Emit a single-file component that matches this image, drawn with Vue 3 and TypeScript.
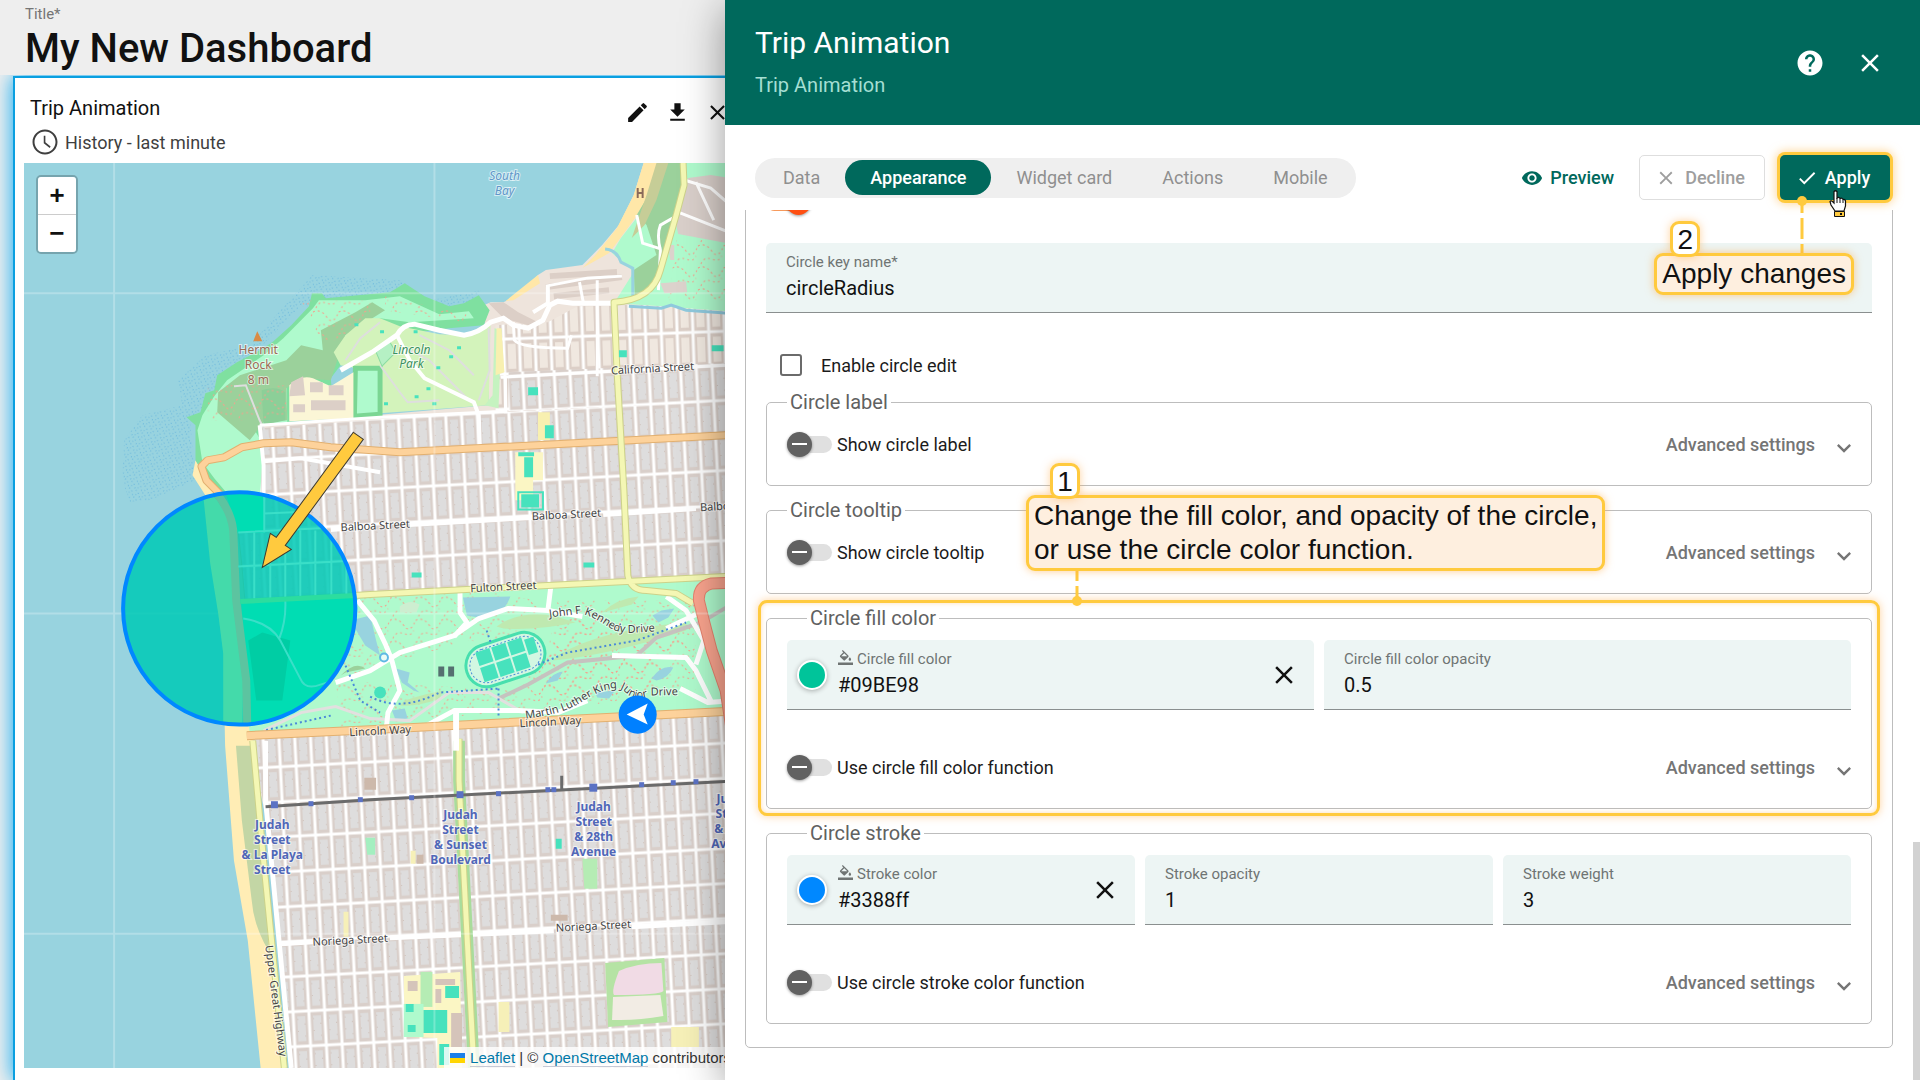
<script setup lang="ts">
import { ref } from 'vue'

interface Tab { id: string; label: string }

const icons = {
  close: 'M19 6.41L17.59 5 12 10.59 6.41 5 5 6.41 10.59 12 5 17.59 6.41 19 12 13.41 17.59 19 19 17.59 13.41 12z',
  pencil: 'M3 17.25V21h3.75L17.81 9.94l-3.75-3.75L3 17.25zM20.71 7.04a1 1 0 0 0 0-1.41l-2.34-2.34a1 1 0 0 0-1.41 0l-1.83 1.83 3.75 3.75 1.83-1.83z',
  download: 'M5 20h14v-2H5v2zM19 9h-4V3H9v6H5l7 7 7-7z',
  clock: 'M11.99 2C6.47 2 2 6.48 2 12s4.47 10 9.99 10C17.52 22 22 17.52 22 12S17.52 2 11.99 2zM12 20.4c-4.64 0-8.4-3.76-8.4-8.4S7.36 3.6 12 3.6s8.4 3.76 8.4 8.4-3.76 8.4-8.4 8.4zM12.3 7H11v6l4.75 3.75.75-1.13-4.2-3.37z',
  help: 'M12 2C6.48 2 2 6.48 2 12s4.48 10 10 10 10-4.48 10-10S17.52 2 12 2zm1 17h-2v-2h2v2zm2.07-7.75l-.9.92C13.45 12.9 13 13.5 13 15h-2v-.5c0-1.1.45-2.1 1.17-2.83l1.24-1.26c.37-.36.59-.86.59-1.41 0-1.1-.9-2-2-2s-2 .9-2 2H8c0-2.21 1.79-4 4-4s4 1.79 4 4c0 .88-.36 1.68-.93 2.25z',
  eye: 'M12 4.5C7 4.5 2.73 7.61 1 12c1.73 4.39 6 7.5 11 7.5s9.27-3.11 11-7.5c-1.73-4.39-6-7.5-11-7.5zM12 17c-2.76 0-5-2.24-5-5s2.24-5 5-5 5 2.24 5 5-2.24 5-5 5zm0-8c-1.66 0-3 1.34-3 3s1.34 3 3 3 3-1.34 3-3-1.34-3-3-3z',
  check: 'M9 16.17L4.83 12l-1.42 1.41L9 19 21 7l-1.41-1.41z',
  chevron: 'M7.41 8.59L12 13.17l4.59-4.58L18 10l-6 6-6-6z',
  fill: 'M16.56,8.94L7.62,0L6.21,1.41L8.59,3.79L3.44,8.94C2.85,9.5 2.85,10.47 3.44,11.06L8.94,16.56C9.23,16.85 9.62,17 10,17C10.38,17 10.77,16.85 11.06,16.56L16.56,11.06C17.15,10.47 17.15,9.5 16.56,8.94M5.21,10L10,5.21L14.79,10H5.21M19,11.5C19,11.5 17,13.67 17,15A2,2 0 0,0 19,17A2,2 0 0,0 21,15C21,13.67 19,11.5 19,11.5M0,20h24v4H0z'
}

const tabs: Tab[] = [
  { id: 'data', label: 'Data' },
  { id: 'appearance', label: 'Appearance' },
  { id: 'card', label: 'Widget card' },
  { id: 'actions', label: 'Actions' },
  { id: 'mobile', label: 'Mobile' }
]
const activeTab = ref('appearance')

const title = ref('My New Dashboard')
const showCircle = ref(true)
const circleKey = ref('circleRadius')
const enableEdit = ref(false)
const showLabel = ref(false)
const showTooltip = ref(false)
const fillColor = ref('#09BE98')
const fillOpacity = ref('0.5')
const useFillFn = ref(false)
const strokeColor = ref('#3388ff')
const strokeOpacity = ref('1')
const strokeWeight = ref('3')
const useStrokeFn = ref(false)

/* Tram stops along the Judah line: x, y, size */
const stops = [
  [273, 804, 7], [310, 803, 5], [360, 799, 5], [412, 797, 5], [461, 794, 7], [500, 793, 5],
  [550, 789, 5], [556, 789, 5], [596, 787, 8], [645, 784, 5], [677, 782, 5], [700, 781, 5]
]
const stopNames = [
  { x: 272, y: 828, lines: ['Judah', 'Street', '& La Playa', 'Street'] },
  { x: 460, y: 818, lines: ['Judah', 'Street', '& Sunset', 'Boulevard'] },
  { x: 593, y: 810, lines: ['Judah', 'Street', '& 28th', 'Avenue'] },
  { x: 733, y: 802, lines: ['Judah', 'Street', '& 19th', 'Avenue'] }
]
const streets = [
  { x: 652, y: 372, t: 'California Street' },
  { x: 375, y: 529, t: 'Balboa Street' },
  { x: 566, y: 518, t: 'Balboa Street' },
  { x: 734, y: 509, t: 'Balboa Street' },
  { x: 503, y: 590, t: 'Fulton Street' },
  { x: 380, y: 734, t: 'Lincoln Way' },
  { x: 550, y: 725, t: 'Lincoln Way' },
  { x: 350, y: 943, t: 'Noriega Street' },
  { x: 593, y: 929, t: 'Noriega Street' }
]
</script>

<template>
  <div class="page">
    <main class="dashboard">
      <header class="dash-head">
        <label for="dash-title">Title*</label>
        <input id="dash-title" v-model="title" type="text">
      </header>
      <div class="canvas">
        <section class="widget">
          <div class="widget-head">
            <div class="widget-titles">
              <h2>Trip Animation</h2>
              <div class="timewindow">
                <svg class="i30" viewBox="0 0 24 24"><path :d="icons.clock" /></svg>
                <span>History - last minute</span>
              </div>
            </div>
            <div class="widget-tools">
              <button type="button" aria-label="Edit"><svg class="i25" viewBox="0 0 24 24"><path :d="icons.pencil" /></svg></button>
              <button type="button" aria-label="Download"><svg class="i25" viewBox="0 0 24 24"><path :d="icons.download" /></svg></button>
              <button type="button" aria-label="Remove"><svg class="i25" viewBox="0 0 24 24"><path :d="icons.close" /></svg></button>
            </div>
          </div>

          <div class="map">
            <svg class="map-art" viewBox="24 163 714 904" preserveAspectRatio="xMinYMin slice">
              <defs>
                <pattern id="blocks-s" width="16" height="35" patternUnits="userSpaceOnUse" patternTransform="translate(400 935) rotate(-3)">
                  <rect width="16" height="35" fill="#d9cfca" />
                  <rect x="4" y="5" width="8" height="25" fill="#dedddd" />
                  <path d="M4 8h1M12 13h-1M4 20h1M12 25h-1" stroke="#cfc2bb" />
                  <path d="M0 0H16M0 35H16M0 0V35M16 0V35" stroke="#fff" stroke-width="3" />
                </pattern>
                <pattern id="blocks-n" width="16" height="35" patternUnits="userSpaceOnUse" patternTransform="translate(388 523) rotate(-3)">
                  <rect width="16" height="35" fill="#d9cfca" />
                  <rect x="4" y="5" width="8" height="25" fill="#dedddd" />
                  <path d="M4 8h1M12 13h-1M4 20h1M12 25h-1" stroke="#cfc2bb" />
                  <path d="M0 0H16M0 35H16M0 0V35M16 0V35" stroke="#fff" stroke-width="3" />
                </pattern>
                <pattern id="blocks-b" width="16" height="35" patternUnits="userSpaceOnUse" patternTransform="translate(617 335) rotate(-2)">
                  <rect width="16" height="35" fill="#dccfc7" />
                  <rect x="4" y="5" width="8" height="25" fill="#f0e8e0" />
                  <path d="M0 0H16M0 35H16M0 0V35M16 0V35" stroke="#fff" stroke-width="3" />
                </pattern>
                <pattern id="shoal" width="7" height="7" patternUnits="userSpaceOnUse" patternTransform="rotate(20)">
                  <path d="M1 1h1M4 3h1M2 5h1M6 6h1" stroke="#5fb0dc" stroke-opacity=".8" />
                </pattern>
                <pattern id="trails" width="26" height="22" patternUnits="userSpaceOnUse">
                  <path d="M0 4Q8 0 14 9T26 4M3 22Q6 14 14 17T24 14" fill="none" stroke="#f5a08c" stroke-width="1" stroke-dasharray="2 3" />
                </pattern>
                <clipPath id="inside"><circle cx="239" cy="608" r="116" /></clipPath>
                <path id="kennedy" d="M549 617L581 613Q596 618 607 626T637 632L672 630" />
                <path id="mlk" d="M525 718Q561 714 580 702T608 689Q618 685 626 693T651 695L700 694" />
                <path id="highway" d="M265 945L280 1062" />
              </defs>

              <rect x="24" y="163" width="714" height="904" fill="#98d3df" />
              <path d="M122 480L124 440L142 415L182 405L178 380L205 355L250 345L280 310L312 275L400 280L430 300L480 290L478 306H300L190 420L195 480L150 500L130 502z" fill="url(#shoal)" />

              <g transform="translate(5 0) scale(.986 1)">
                <!-- land -->
                <path d="M647 163L637 195L622 225L605 245L585 265L548 270L540 275L520 295L505 302L492 302L478 308L490 330L490 405L258 425L262 540L247 600V740L264 815L280 940L290 1067H748V163z" fill="#eee4dc" />
                <path d="M258 428L485 411L748 398V580L240 604L236 500L258 500z" fill="url(#blocks-n)" />
                <path d="M250 737L748 711V1067H288L280 940L264 815z" fill="url(#blocks-s)" />
                <path d="M497 325L550 322L580 306L748 302V400L497 412z" fill="url(#blocks-b)" />
                <path d="M510 372L748 362V400L510 411z" fill="url(#blocks-n)" />
                <path d="M490 303L505 302L520 312L540 322L530 325L505 318z" fill="#dccfc7" />
                <path d="M552 276L620 272M548 287L625 277M556 296L612 290" stroke="#dccfc7" stroke-width="6" />

                <!-- beaches -->
                <path d="M647 163H662L648 205L622 240L612 253L585 268L598 255L620 228L637 195z" fill="#ffe7a8" />
                <path d="M540 275L542 283L515 300L507 301z" fill="#ffe7a8" />
                <path d="M193 460L190 475L203 495L208 530L212 580L221 650L223 745L232 860L246 940L259 1067H284L270 945L262 860L252 745L240 640L236 560L226 505L205 480z" fill="#ffedb5" />
                <path d="M234 745H252L257 800L267 900V950Q252 925 250 900L240 820z" fill="#c3d6a5" />

                <!-- presidio -->
                <path d="M662 163H748V312L690 308L665 306L617 303L637 272L615 253L624 238L650 205z" fill="#affacd" />
                <path d="M662 163H687L686 190L664 262L655 286L638 296L637 270L660 255L650 225L640 215L655 190z" fill="#9bd19b" />
                <path d="M660 163H672L660 200L648 225L635 238L650 195z" fill="#c6cd97" />
                <path d="M692 178L715 175L748 180V246L682 234L678 216z" fill="#d9cfca" />
                <path d="M688 180L715 188L738 208M682 212L738 234M700 182L718 220M662 290L664 250Q660 235 664 225L680 216M640 215L646 243L665 249" fill="none" stroke="#fff" stroke-width="3" />
                <path d="M608 249Q620 250 624 262L636 268V297" fill="none" stroke="#98d3df" stroke-width="3" />
                <path d="M632 306L665 308L675 305L690 310L748 314" fill="none" stroke="#8fc9dd" stroke-width="3" />
                <path d="M680 240H748V300H672z" fill="url(#trails)" />
                <path d="M664 283L690 281L691 292L668 293zM672 245H678V260H674z" fill="#dcd2cc" />

                <!-- lands end and lincoln park -->
                <path d="M184 417L198 412L203 393L212 390L215 375L235 362L262 348L272 341L290 325L308 306L311 293L321 293L325 298L390 292L405 283L425 296L450 306L465 303L480 295L491 310L485 325L450 328L395 335L340 365L330 378L334 418L258 424V500L240 512L205 480L193 460V425z" fill="#7fe0a0" />
                <path d="M200 415L212 396L225 380L262 355L282 338L312 308L318 300L365 300L400 296L440 314L470 311L475 318L410 322L380 318L345 340L330 370L285 378L286 422L250 425L262 445L258 500L238 508L212 478L200 462L195 430z" fill="#affacd" />
                <path d="M216 392L238 375L285 360L300 345L322 350L320 330L355 312L372 302L385 310L345 335L335 365L330 380L300 378L285 388L286 420L262 422L248 440L215 412z" fill="#9bd19b" />
                <path d="M260 390Q275 385 284 392V420L262 425z" fill="#8ccf98" />
                <path d="M205 385H285V420H205zM300 300H370V340H320zM385 296L470 314L465 322L385 310z" fill="url(#trails)" />
                <path d="M333 352L345 335L365 318L380 318L400 326L440 334L470 335L492 322L490 405L380 413L378 372L340 365z" fill="#d3f3bb" />
                <path d="M355 368H380V414L354 416z" fill="#affacd" stroke="#7bd693" stroke-width="5" />
                <path d="M288 385Q300 374 312 378L330 386L353 372V418L288 421z" fill="#fbf6d6" />
                <path d="M290 382L302 376L304 395L288 396zM309 382H322V392H309zM310 400H345V410H310zM328 385H343V395H328zM292 404H304V412H292z" fill="#dccfc7" />
                <path d="M232 386L244 385L258 420L268 440M380 365L400 392L408 402L440 400M420 335L450 350L475 375M400 345L430 360L470 400M490 328L491 370L480 400M345 360L360 338L380 322" fill="none" stroke="#dedede" stroke-width="2" />
                <path d="M376 352L390 342L396 352L382 366z" fill="#b5f0c4" stroke="#8adba2" />
                <path d="M380 330h4v3h-4zM414 330h4v3h-4zM458 346h4v3h-4zM450 355h4v3h-4zM437 366h4v3h-4zM427 387h4v3h-4zM415 395h4v3h-4zM384 402h4v3h-4zM433 402h4v3h-4zM354 323h4v3h-4z" fill="#47e2bd" />
                <path d="M496 328L494 395L486 405L500 408L503 330z" fill="#c5f3c0" />
                <path d="M498 328H503L506 372L497 375zM540 412H552V440H540z" fill="#f8f0b0" />

                <!-- golden gate park -->
                <path d="M240 602L748 576V708L248 735z" fill="#affacd" />
                <path d="M330 600L480 590L540 600V650L470 640L330 680zM560 600L700 600V690L540 700z" fill="url(#trails)" />
                <path d="M335 680L520 690L580 610L690 640L640 700L340 726z" fill="url(#trails)" />
                <path d="M498 626Q520 610 555 615L578 622Q540 630 505 628zM560 655Q600 630 690 622L690 630Q610 655 555 660zM405 700Q430 692 445 690L440 698Q420 706 400 705zM605 612Q620 598 642 596L635 604z" fill="#bfe9b0" />
                <path d="M464 597L512 596Q505 615 485 618L468 615zM656 615L665 610L678 608L672 617L662 622zM655 678Q665 664 677 667Q672 678 660 680zM548 683Q555 672 565 671L560 680zM396 668L410 672L408 682L420 692L414 690L402 682zM598 692L618 690L612 698L600 697zM350 620L370 615L376 640L380 655L365 645zM392 710L405 708L408 718L396 720z" fill="#98d3df" />
                <path d="M340 675Q355 660 365 668L345 672z" fill="#9bd19b" />
                <path d="M400 606Q410 598 420 604L417 612H400z" fill="#cdeed0" />
                <g transform="rotate(-18 507 659)">
                  <rect x="466" y="638" width="82" height="42" rx="21" fill="#d2f7e2" stroke="#47dfae" stroke-width="3" />
                  <rect x="470" y="642" width="74" height="34" rx="17" fill="none" stroke="#4a8ad8" stroke-width="1" stroke-dasharray="2 2" />
                  <path d="M480 643H495V657H480zM497 643H512V657H497zM514 643H529V657H514zM480 659H495V674H480zM497 659H512V674H497zM514 659H529V674H514zM531 646H541V662H531z" fill="#47e2bd" />
                </g>
                <circle cx="380" cy="692" r="6" fill="#47e2bd" />
                <path d="M439 666H445V676H439zM449 666H455V676H449z" fill="#556f70" />
                <path d="M748 597L705 622L660 637L640 655L570 662L530 684L500 698" fill="none" stroke="#c6c2bf" stroke-width="4" />
                <path d="M262 730L300 712L335 706L370 718L410 720L450 692L490 692L525 712" fill="none" stroke="#e2e0df" stroke-width="3" />
                <path d="M357 600L374 620L386 645L392 660L400 690L388 712L386 730M335 682L370 670L400 652L455 635L480 618L510 608L550 610M461 592V612L468 622L455 636M553 586L550 610L585 616M670 628L700 614M670 596L690 610L708 640L700 664M615 655L690 657L700 670L715 700M684 688L712 702L738 700M427 725L455 710L520 710L560 712L590 700M457 710V740" fill="none" stroke="#fff" stroke-width="5" stroke-linejoin="round" />
                <path d="M370 696Q400 712 440 692L500 688M330 715L262 730M500 688V715M540 664L570 652L640 640L690 622M488 630L492 642M345 665L360 700L380 712" fill="none" stroke="#4a8ad8" stroke-width="2" stroke-dasharray="2 3" />
                <circle cx="384" cy="657" r="4" fill="#e9fbf5" stroke="#5fb8e4" stroke-width="2" />

                <!-- north side roads -->
                <g fill="none" stroke="#fff">
                  <path d="M340 370L372 352L397 335Q403 324 415 324L440 330L465 335Q480 333 492 322L505 318L515 325L530 328L545 320L552 305L560 301L575 303L617 303" stroke-width="5" />
                  <path d="M397 335L410 360L425 378L450 390L475 402L480 415L481 445M550 286V303L535 312" stroke-width="4" />
                  <path d="M502 377L748 364M507 377V413M258 425L380 417L507 411M515 322L516 340Q522 348 570 348L574 335M548 286L590 278L625 276M600 280V376M582 282L586 303" stroke-width="3" />
                  <path d="M258 425L262 465V500M262 461L300 458L380 472" stroke-width="4" />
                  <path d="M330 529L370 526M410 524L534 517M606 514L700 508M280 943L312 941M390 937L556 930M635 926L748 920M264 740V800L290 1067" stroke-width="5" />
                </g>

                <!-- arterial roads -->
                <g fill="none" stroke-linejoin="round">
                  <path d="M247 725L245 660L236 560L231 515L222 498L204 480L199 466L205 460L222 457L240 447L262 443L290 442L330 447L400 452L748 434" stroke="#e2b070" stroke-width="8" />
                  <path d="M247 725L245 660L236 560L231 515L222 498L204 480L199 466L205 460L222 457L240 447L262 443L290 442L330 447L400 452L748 434" stroke="#fdd29b" stroke-width="6" />
                  <path d="M245 735L370 729L748 710" stroke="#e2b070" stroke-width="9" />
                  <path d="M245 735L370 729L748 710" stroke="#fdd29b" stroke-width="7" />
                  <path d="M460 740V780L475 1067" stroke="#a9dc9c" stroke-width="12" />
                  <path d="M241 602L370 594L748 575M687 163L688 185L680 215L664 270Q656 300 617 302L620 370L627 490L631 575Q634 590 650 590L680 593L697 603M251 740L262 860L283 1067M460 738V780L475 1067" stroke="#ccd28a" stroke-width="7" />
                  <path d="M241 602L370 594L748 575M687 163L688 185L680 215L664 270Q656 300 617 302L620 370L627 490L631 575Q634 590 650 590L680 593L697 603M251 740L262 860L283 1067M460 738V780L475 1067" stroke="#f4f7b4" stroke-width="5" />
                  <path d="M457 710V750" stroke="#fff" stroke-width="6" />
                  <path d="M748 582L716 583Q702 586 703 600L708 620L716 650L730 690L737 735" stroke="#e5826e" stroke-width="12" />
                  <path d="M748 582L716 583Q702 586 703 600L708 620L716 650L730 690L737 735" stroke="#faa48e" stroke-width="10" />
                  <path d="M264 806L370 799L748 780M564 790V775" stroke="#6b6b6b" stroke-width="3" />
                </g>

                <!-- schools and pitches -->
                <path d="M517 452H545V480H535V500H517z" fill="#fbf6c4" />
                <path d="M526 457H535V477H526zM520 452H536V456H520zM523 494H541V507H523zM530 387H540V395H530zM622 350H630V357H622zM412 572H422V577H412zM586 562H597V567H586zM547 425H556V438H547zM716 345H728V351H716z" fill="#47e2bd" />
                <path d="M520 492H545V509H520z" fill="none" stroke="#47e2bd" stroke-width="2" />
                <path d="M404 975L461 971L463 1067H438V1037L405 1036z" fill="#fbf6c4" />
                <path d="M408 980H418V990H408zM436 978H456V984H436zM436 988H442V1002H436zM452 1012H463V1046H452z" fill="#d5c4ba" />
                <path d="M421 971H433V1006H421z" fill="#b5ecb4" />
                <path d="M404 1003H424V1036H404z" fill="#affacd" />
                <path d="M424 1009H448V1032H424zM406 1003H414V1011H406zM446 985H460V997H446zM408 1024H416V1031H408zM440 1043H450V1064H440zM686 1040H696V1046H686zM587 869H598V874H587zM558 838H564V848H558z" fill="#47e2bd" />
                <path d="M585 858H600V888H587z" fill="#b5ecb4" />
                <path d="M365 837H375V854H367z" fill="#a4efc0" />
                <path d="M343 911H348V936H343zM500 1001H511V1031H500zM675 1026H703V1046H675zM411 850H416V863H411z" fill="#f6f0b8" />
                <path d="M417 854H424V863H417zM553 914H570V920H553zM364 777H376V789H364z" fill="#cdb9ab" />
                <path d="M608 962L668 957L671 1021L611 1026z" fill="#b5e3a4" />
                <path d="M622 970Q640 962 665 962L667 990Q664 994 617 994Q614 990 622 970z" fill="#f1dbe5" />
                <path d="M616 996L664 994L667 1015Q640 1020 615 1019z" fill="#f2ece4" />

                <rect v-for="(s, i) in stops" :key="i" :x="s[0] - s[2] / 2" :y="s[1] - s[2] / 2" :width="s[2]" :height="s[2]" fill="#5b72c4" />
                <path d="M641 188V198M646 188V198M641 193H646" stroke="#8a6a5a" stroke-width="2" />
              </g>

              <path d="M114 163V1067M434 163V1067M24 293H738M24 613H738M24 933H738" stroke="#fff" stroke-opacity=".25" stroke-width="2" />

              <!-- labels -->
              <g class="lbl" text-anchor="middle">
                <g class="water"><text x="504" y="180">South</text><text x="504" y="195">Bay</text></g>
                <g class="peak"><text x="258" y="354">Hermit</text><text x="258" y="369">Rock</text><text x="258" y="384">8 m</text></g>
                <g class="park"><text x="411" y="354">Lincoln</text><text x="411" y="368">Park</text></g>
                <text v-for="s in streets" :key="s.t + s.x" class="street" :x="s.x" :y="s.y" :transform="`rotate(-3 ${s.x} ${s.y})`">{{ s.t }}</text>
                <g v-for="n in stopNames" :key="n.x" class="stop">
                  <text v-for="(l, i) in n.lines" :key="i" :x="n.x" :y="n.y + i * 15">{{ l }}</text>
                </g>
              </g>
              <g class="lbl street">
                <text><textPath href="#kennedy">John F Kennedy Drive</textPath></text>
                <text><textPath href="#mlk">Martin Luther King Junior Drive</textPath></text>
                <text><textPath href="#highway">Upper Great Highway</textPath></text>
              </g>
              <path d="M257 331L262 341H253z" fill="#d98b45" />

              <!-- tracked entity, its circle and the pointer -->
              <circle cx="239" cy="608" r="116" fill="#00cab6" fill-opacity=".86" />
              <g clip-path="url(#inside)" fill="none">
                <path d="M222 480H262L265 532H237z" fill="#00ddb3" />
                <path d="M241 602L358 596V700L250 730z" fill="#00ddb3" />
                <path d="M248 640L262 632L290 640L282 700H256z" fill="#00cda4" />
                <path d="M202 485L210 563L218 613L223 653V726L242 724L243 680L238 613L230 547V520L217 500z" fill="#44daaa" />
                <path d="M214 490Q231 510 233 530L236 600L246 680L247 724" stroke="#5cc4a0" stroke-width="8" />
                <path d="M238 532L358 526M264 490V532M254 532V598M270 532V598M285 530V598M300 530V596M315 530V596M331 528V596M346 528V596M238 566L358 560M264 513L310 511M243 618Q270 622 280 640L300 678Q305 690 320 684L350 675M285 600Q286 620 279 638" stroke="#3adfc8" stroke-width="2" />
                <path d="M240 601L358 595" stroke="#2cdd9f" stroke-width="5" />
              </g>
              <circle cx="239" cy="608" r="116" fill="none" stroke="#0088ff" stroke-width="4" />
              <path d="M353 432L363 439L285 545L291 549L262 567L270 533L276 537z" fill="#ffca3e" stroke="#3d3a30" stroke-width="1" />
              <circle cx="637" cy="714" r="19" fill="#0080ff" />
              <path d="M626 714L647 703L643 714L647 724z" fill="#fff" />
            </svg>

            <div class="zoom">
              <button type="button" aria-label="Zoom in">+</button>
              <button type="button" aria-label="Zoom out">−</button>
            </div>
            <div class="credit">
              <svg width="15" height="10" viewBox="0 0 15 10"><path fill="#1a7fe8" d="M0 0h15v5H0z" /><path fill="#ffd500" d="M0 5h15v5H0z" /></svg>
              <a href="#leaflet">Leaflet</a> | © <a href="#osm">OpenStreetMap</a> contributors
            </div>
          </div>
        </section>
      </div>
    </main>

    <aside class="panel">
      <header class="panel-head">
        <div class="head-text">
          <h1>Trip Animation</h1>
          <p>Trip Animation</p>
        </div>
        <div class="head-tools">
          <button type="button" aria-label="Help"><svg class="i30" viewBox="0 0 24 24"><path :d="icons.help" /></svg></button>
          <button type="button" aria-label="Close"><svg class="i30" viewBox="0 0 24 24"><path :d="icons.close" /></svg></button>
        </div>
      </header>

      <div class="toolbar">
        <nav class="tabs">
          <button v-for="t in tabs" :key="t.id" type="button" :class="{ active: t.id === activeTab }" @click="activeTab = t.id">{{ t.label }}</button>
        </nav>
        <div class="actions">
          <button type="button" class="preview"><svg class="i22" viewBox="0 0 24 24"><path :d="icons.eye" /></svg>Preview</button>
          <button type="button" class="decline"><svg class="i22" viewBox="0 0 24 24"><path :d="icons.close" /></svg>Decline</button>
          <div class="apply-wrap">
            <button type="button" class="apply"><svg class="i22" viewBox="0 0 24 24"><path :d="icons.check" /></svg>Apply</button>
            <svg class="lead lead-apply" width="10" height="57" viewBox="0 0 10 57">
              <circle cx="5" cy="5" r="5" fill="#ffca3e" />
              <path d="M5 8V17M5 22V43M5 48V57" stroke="#ffca3e" stroke-width="3" />
            </svg>
            <div class="note note-apply"><b>2</b>Apply changes</div>
            <svg class="hand" width="18" height="28" viewBox="0 0 18 28">
              <path d="M5 1.500Q6.500 0 8 1.500V8Q10 6.500 11 8.500Q13 7.500 14 9.500Q16 9 16.500 11V16L15 21H6L2 15L1 11.500Q2 10 4 12L5 13z" fill="#fff" stroke="#111" stroke-width="1.200" />
              <path d="M8 8V13M11 9V13M14 10V13" stroke="#111" />
              <path d="M5.500 21.500H15.500V26.500H5.500z" fill="#ffca3e" stroke="#111" />
              <path d="M11 23h2v2h-2z" fill="#111" />
            </svg>
          </div>
        </div>
      </div>

      <div class="scroller">
        <form class="group" @submit.prevent>
          <div class="row"><input v-model="showCircle" class="switch" type="checkbox" aria-label="Show circle"></div>

          <div class="field">
            <div class="field-text">
              <label for="f-key">Circle key name*</label>
              <input id="f-key" v-model="circleKey" type="text">
            </div>
          </div>

          <label class="check-row"><input v-model="enableEdit" type="checkbox">Enable circle edit</label>

          <fieldset>
            <legend>Circle label</legend>
            <div class="row">
              <label><input v-model="showLabel" class="switch" type="checkbox">Show circle label</label>
              <button type="button" class="advanced">Advanced settings<svg viewBox="0 0 24 24"><path :d="icons.chevron" /></svg></button>
            </div>
          </fieldset>

          <fieldset>
            <legend>Circle tooltip</legend>
            <div class="row">
              <label><input v-model="showTooltip" class="switch" type="checkbox">Show circle tooltip</label>
              <button type="button" class="advanced">Advanced settings<svg viewBox="0 0 24 24"><path :d="icons.chevron" /></svg></button>
            </div>
          </fieldset>

          <div class="marked">
            <fieldset class="wide">
              <legend>Circle fill color</legend>
              <div class="fields">
                <div class="field color">
                  <button type="button" class="swatch" aria-label="Pick fill color" :style="{ background: '#00c49a' }"></button>
                  <div class="field-text">
                    <label for="f-fill"><svg viewBox="0 0 24 24"><path :d="icons.fill" /></svg>Circle fill color</label>
                    <input id="f-fill" v-model="fillColor" type="text">
                  </div>
                  <button type="button" class="clear" aria-label="Clear"><svg class="i30" viewBox="0 0 24 24"><path :d="icons.close" /></svg></button>
                </div>
                <div class="field">
                  <div class="field-text">
                    <label for="f-fill-op">Circle fill color opacity</label>
                    <input id="f-fill-op" v-model="fillOpacity" type="text">
                  </div>
                </div>
              </div>
              <div class="row">
                <label><input v-model="useFillFn" class="switch" type="checkbox">Use circle fill color function</label>
                <button type="button" class="advanced">Advanced settings<svg viewBox="0 0 24 24"><path :d="icons.chevron" /></svg></button>
              </div>
            </fieldset>
            <div class="frame"></div>
            <svg class="lead lead-fill" width="10" height="35" viewBox="0 0 10 35">
              <path d="M5 0V10M5 15V28" stroke="#ffca3e" stroke-width="3" />
              <circle cx="5" cy="30" r="5" fill="#ffca3e" />
            </svg>
            <div class="note note-fill"><b>1</b>Change the fill color, and opacity of the circle,<br>or use the circle color function.</div>
          </div>

          <fieldset class="wide">
            <legend>Circle stroke</legend>
            <div class="fields">
              <div class="field color">
                <button type="button" class="swatch" aria-label="Pick stroke color" :style="{ background: '#0088ff' }"></button>
                <div class="field-text">
                  <label for="f-stroke"><svg viewBox="0 0 24 24"><path :d="icons.fill" /></svg>Stroke color</label>
                  <input id="f-stroke" v-model="strokeColor" type="text">
                </div>
                <button type="button" class="clear" aria-label="Clear"><svg class="i30" viewBox="0 0 24 24"><path :d="icons.close" /></svg></button>
              </div>
              <div class="field">
                <div class="field-text">
                  <label for="f-stroke-op">Stroke opacity</label>
                  <input id="f-stroke-op" v-model="strokeOpacity" type="text">
                </div>
              </div>
              <div class="field">
                <div class="field-text">
                  <label for="f-stroke-w">Stroke weight</label>
                  <input id="f-stroke-w" v-model="strokeWeight" type="text">
                </div>
              </div>
            </div>
            <div class="row">
              <label><input v-model="useStrokeFn" class="switch" type="checkbox">Use circle stroke color function</label>
              <button type="button" class="advanced">Advanced settings<svg viewBox="0 0 24 24"><path :d="icons.chevron" /></svg></button>
            </div>
          </fieldset>
        </form>
      </div>
      <div class="thumb"></div>
    </aside>
  </div>
</template>

<style>
body { margin: 0; }
</style>

<style scoped>
* { box-sizing: border-box; }
.page {
  display: grid;
  grid-template-columns: 725fr 1195fr;
  height: 100vh;
  overflow: hidden;
  font-family: Roboto, sans-serif;
  font-size: 18px;
  color: #1b1b1b;
  background: #eee;
}
button, input { font: inherit; color: inherit; }
button { border: 0; padding: 0; background: none; cursor: pointer; display: flex; align-items: center; justify-content: center; }
input[type='text'] { border: 0; padding: 0; background: none; outline: 0; width: 100%; min-width: 0; }
h1, h2, p { margin: 0; font-weight: 400; }
svg { fill: currentColor; flex: none; display: block; }
.i22 { width: 22px; height: 22px; }
.i25 { width: 25px; height: 25px; }
.i30 { width: 30px; height: 30px; }

/* dashboard */
.dashboard { display: flex; flex-direction: column; min-width: 0; min-height: 0; overflow: hidden; }
.dash-head { display: flex; flex-direction: column; height: 75px; padding: 5px 0 0 25px; flex: none; }
.dash-head label { font-size: 15px; line-height: 18px; color: #757575; }
.dash-head input { font-size: 40px; line-height: 52px; height: 52px; font-weight: 500; color: #111; }
.canvas { flex: 1; min-height: 0; display: flex; padding: 1px 0 0 13px; overflow: hidden; }
.widget {
  flex: 1;
  display: flex;
  flex-direction: column;
  margin-right: -20px;
  padding: 0 6px 12px 9px;
  background: #fff;
  border: 2px solid #0a9fe0;
  border-bottom: 0;
  box-shadow: 0 0 20px #03a9f4;
}
.widget-head { display: flex; justify-content: space-between; height: 85px; padding: 14px 0 0 6px; flex: none; }
.widget-titles h2 { font-size: 20px; line-height: 32px; color: #111; }
.timewindow { display: flex; align-items: center; gap: 5px; height: 36px; color: #3f3f3f; }
.widget-tools { display: flex; height: 40px; color: #111; }
.widget-tools button { width: 40px; height: 40px; }

.map { position: relative; flex: 1; min-height: 0; overflow: hidden; background: #98d3df; }
.map-art { width: 100%; height: 100%; }
.lbl { font-family: 'Noto Sans', sans-serif; font-size: 12px; paint-order: stroke; stroke: rgba(255, 255, 255, 0.6); stroke-width: 2px; }
.water { font-style: italic; fill: #5f97c9; }
.peak { fill: #9c6b55; }
.park { font-style: italic; fill: #3c9160; }
.street { font-size: 11px; fill: #444; }
.stop { font-weight: 700; fill: #5067b8; }
.zoom {
  position: absolute;
  top: 12px;
  left: 12px;
  border: 2px solid rgba(0, 0, 0, 0.22);
  border-radius: 5px;
  background-clip: padding-box;
}
.zoom button { width: 38px; height: 37px; padding-top: 4px; background: #fff; color: #111; font: 700 26px/33px 'Liberation Mono', monospace; border-radius: 0 0 3px 3px; }
.zoom button:first-child { height: 38px; border-bottom: 1px solid #ccc; border-radius: 3px 3px 0 0; }
.credit {
  position: absolute;
  right: 0;
  bottom: 0;
  padding: 0 6px;
  background: rgba(255, 255, 255, 0.8);
  font: 15px/21px 'Liberation Sans', Arial, sans-serif;
  color: #333;
  white-space: nowrap;
}
.credit svg { display: inline-block; margin-right: 5px; }
.credit a { color: #0078a8; text-decoration: none; border-bottom: 1px solid #c5c9d6; }

/* details panel */
.panel { position: relative; z-index: 1; display: flex; flex-direction: column; min-width: 0; min-height: 0; background: #fff; box-shadow: 0 8px 40px rgba(0, 0, 0, 0.4); }
.panel-head { display: flex; justify-content: space-between; align-items: center; flex: none; height: 125px; padding: 0 30px; background: #00695c; color: #fff; }
.head-text { padding-top: 2px; }
.panel-head h1 { font-size: 30px; line-height: 42px; }
.panel-head p { font-size: 20px; line-height: 42px; color: #a5dfd3; }
.head-tools { display: flex; gap: 10px; margin-right: -5px; }
.head-tools button { width: 50px; height: 50px; }

.toolbar { position: relative; z-index: 2; display: flex; justify-content: space-between; align-items: center; flex: none; height: 85px; padding: 20px 30px 0; }
.tabs { display: flex; align-items: center; height: 40px; padding: 0 3px; border-radius: 20px; background: #efefef; }
.tabs button { height: 35px; padding: 0 25px; border-radius: 18px; color: #8f8f8f; white-space: nowrap; }
.tabs .active { background: #00695c; color: #fff; font-weight: 500; }
.actions { display: flex; align-items: center; font-weight: 500; }
.actions button { height: 45px; border-radius: 5px; }
.preview { gap: 7px; margin-right: 25px; color: #00695c; }
.actions .decline { gap: 8px; width: 126px; padding-right: 4px; border: 1px solid #dedede; color: #9e9e9e; }
.apply-wrap { position: relative; margin-left: 15px; }
.actions .apply { gap: 7px; width: 110px; padding-right: 4px; background: #00695c; color: #fff; box-shadow: 0 0 0 3px #ffca3e, 0 0 10px 4px rgba(255, 190, 90, 0.6); }

.note {
  position: absolute;
  padding: 1px 5px;
  border: 3px solid #ffca3e;
  border-radius: 9px;
  background: #feefdf;
  box-shadow: 0 0 8px rgba(255, 170, 70, 0.6);
  color: #111;
  font: 28px/34px 'Liberation Sans', Arial, sans-serif;
  white-space: nowrap;
}
.note b {
  position: absolute;
  bottom: 100%;
  left: 13px;
  width: 30px;
  height: 36px;
  margin-bottom: -1px;
  border: 3px solid #ffca3e;
  border-radius: 9px;
  background: #fff;
  box-shadow: 0 0 8px rgba(255, 170, 70, 0.5);
  font-weight: 400;
  line-height: 31px;
  text-align: center;
}
.note-apply { top: 98px; right: 36px; }
.note-fill { left: 260px; bottom: calc(100% + 35px); }
.note-fill b { left: 21px; }
.lead { position: absolute; }
.lead-apply { top: 41px; left: 17px; }
.lead-fill { left: 306px; bottom: 100%; }
.hand { position: absolute; top: 35px; left: 49px; }
.frame {
  position: absolute;
  inset: -6px -8px -7px -8px;
  border: 3px solid #ffca3e;
  border-radius: 9px;
  box-shadow: 0 0 8px rgba(255, 170, 70, 0.5), inset 0 0 5px rgba(255, 170, 70, 0.4);
  pointer-events: none;
}
.marked { position: relative; margin-bottom: 12px; }

.scroller { flex: 1; min-height: 0; display: flex; flex-direction: column; justify-content: flex-end; overflow: hidden; padding: 0 27px 32px 20px; }
.group { flex: none; padding: 0 20px 23px; border: 1px solid #bdbdbd; border-radius: 5px; }
.row { display: flex; align-items: center; justify-content: space-between; height: 60px; margin-bottom: 11px; }
.row label { display: flex; align-items: center; gap: 5px; }
.switch { appearance: none; position: relative; width: 45px; height: 17px; margin: 0; border-radius: 9px; background: #e0e0e0; }
.switch::before {
  content: '';
  position: absolute;
  top: -4px;
  left: 0;
  width: 25px;
  height: 25px;
  border-radius: 50%;
  background: linear-gradient(#fff, #fff) center / 15px 2px no-repeat #616161;
  box-shadow: 0 1px 3px rgba(0, 0, 0, 0.4);
}
.switch:checked { background: #f79a5c; }
.switch:checked::before { left: 20px; background: #ff4f12; }

.field { display: flex; align-items: center; min-width: 0; height: 70px; padding: 0 20px; border-bottom: 1px solid #8a8f8f; border-radius: 5px 5px 0 0; background: #edf5f4; }
.field-text { flex: 1; min-width: 0; display: flex; flex-direction: column; padding-bottom: 1px; }
.field-text label { display: flex; align-items: center; gap: 4px; height: 22px; font-size: 15px; color: #6f7473; white-space: nowrap; }
.field-text label svg { width: 15px; height: 15px; margin-bottom: 4px; }
.field-text input { height: 30px; font-size: 20px; color: #111; }
.field.color { padding: 0 15px 0 10px; }
.swatch { flex: none; width: 30px; height: 30px; margin-right: 11px; border: 2px solid #fff; border-radius: 50%; background-clip: padding-box; box-shadow: 0 1px 5px rgba(0, 0, 0, 0.3); }
.clear { color: #111; }
.fields { display: grid; grid-auto-flow: column; grid-auto-columns: minmax(0, 1fr); gap: 10px; padding-top: 10px; margin-bottom: 27px; }

.check-row { display: flex; align-items: center; gap: 19px; height: 50px; margin: 27px 0 0 14px; }
.check-row input { appearance: none; width: 22px; height: 22px; margin: 0; border: 2px solid #6b6b6b; border-radius: 3px; }

fieldset { min-width: 0; margin: 0 0 12px; padding: 0 20px; border: 1px solid #bdbdbd; border-radius: 5px; }
fieldset:last-child, .marked fieldset { margin: 0; }
legend { padding: 0 3px; font-size: 20px; line-height: 24px; color: #616161; }
.wide legend { margin-left: 20px; }
.advanced { gap: 15px; font-weight: 500; color: #757575; }
.advanced svg { width: 28px; height: 28px; margin: 7px -7px 0 0; }

.thumb { position: absolute; right: 0; bottom: 0; width: 7px; height: 22%; background: #d2d2d2; }
</style>
